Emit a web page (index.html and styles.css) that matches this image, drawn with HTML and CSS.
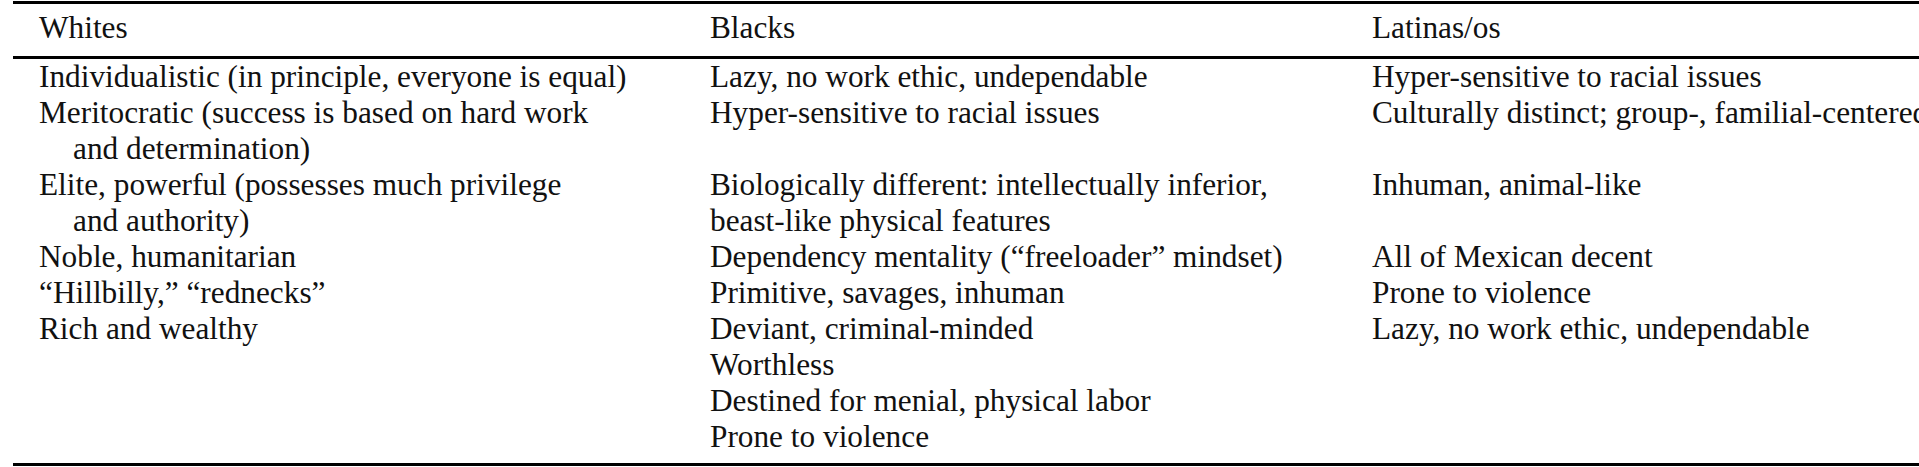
FILE: index.html
```html
<!DOCTYPE html>
<html lang="en">
<head>
<meta charset="utf-8">
<title>Stereotypes table</title>
<link rel="stylesheet" href="styles.css">
</head>
<body>
<table class="stereo">
  <colgroup>
    <col class="c1">
    <col class="c2">
    <col class="c3">
  </colgroup>
  <thead>
    <tr>
      <th>Whites</th>
      <th>Blacks</th>
      <th>Latinas/os</th>
    </tr>
  </thead>
  <tbody>
    <tr>
      <td class="hang">Individualistic (in principle, everyone is equal)</td>
      <td>Lazy, no work ethic, undependable</td>
      <td>Hyper-sensitive to racial issues</td>
    </tr>
    <tr>
      <td class="hang">Meritocratic (success is based on hard work<br>and determination)</td>
      <td>Hyper-sensitive to racial issues</td>
      <td>Culturally distinct; group-, familial-centered</td>
    </tr>
    <tr>
      <td class="hang">Elite, powerful (possesses much privilege<br>and authority)</td>
      <td>Biologically different: intellectually inferior,<br>beast-like physical features</td>
      <td>Inhuman, animal-like</td>
    </tr>
    <tr>
      <td class="hang">Noble, humanitarian</td>
      <td>Dependency mentality (“freeloader” mindset)</td>
      <td>All of Mexican decent</td>
    </tr>
    <tr>
      <td class="hang">“Hillbilly,” “rednecks”</td>
      <td>Primitive, savages, inhuman</td>
      <td>Prone to violence</td>
    </tr>
    <tr>
      <td class="hang">Rich and wealthy</td>
      <td>Deviant, criminal-minded</td>
      <td>Lazy, no work ethic, undependable</td>
    </tr>
    <tr>
      <td class="hang"></td>
      <td>Worthless</td>
      <td></td>
    </tr>
    <tr>
      <td class="hang"></td>
      <td>Destined for menial, physical labor</td>
      <td></td>
    </tr>
    <tr class="last">
      <td class="hang"></td>
      <td>Prone to violence</td>
      <td></td>
    </tr>
  </tbody>
</table>
</body>
</html>
```

FILE: styles.css
```css
html, body {
  margin: 0;
  padding: 0;
  overflow: hidden;
  background: #fff;
}

body {
  padding-top: 1px;
  font-family: "Liberation Serif", "Times New Roman", serif;
  font-size: 31.3px;
  line-height: 36px;
  color: #111;
}

.stereo {
  margin-left: 13px;
  border-collapse: collapse;
  table-layout: fixed;
  width: 2033px;
  border-top: 3px solid #000;
  border-bottom: 3px solid #000;
}

.stereo .c1 { width: 671px; }
.stereo .c2 { width: 662px; }
.stereo .c3 { width: 700px; }

.stereo th {
  font-weight: normal;
  text-align: left;
  padding: 6px 0 10px 26px;
  white-space: nowrap;
  border-bottom: 3px solid #000;
}

.stereo td {
  padding: 0 0 0 26px;
  vertical-align: top;
  white-space: nowrap;
}

.stereo td.hang {
  padding-left: 60px;
  text-indent: -34px;
}

.stereo tr.last td {
  padding-bottom: 8px;
}
```
